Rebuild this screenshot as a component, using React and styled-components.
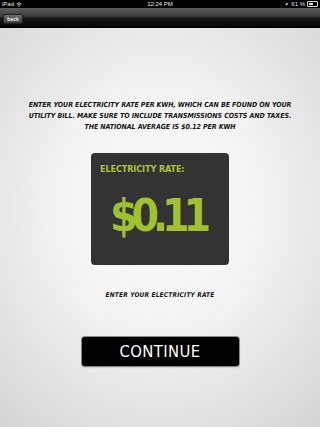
import React from "react";
import styled, { createGlobalStyle } from "styled-components";

const Global = createGlobalStyle`
  html, body { margin: 0; padding: 0; width: 320px; height: 427px; overflow: hidden; background: #000; }
  #root { width: 320px; height: 427px; }
`;

const Screen = styled.div`
  width: 320px;
  height: 427px;
  display: flex;
  flex-direction: column;
  font-family: "Liberation Sans", Arial, sans-serif;
`;

const StatusBar = styled.div`
  height: 8px;
  background: #000;
  color: #e8e8e8;
  font-size: 6px;
  display: grid;
  grid-template-columns: 1fr auto 1fr;
  align-items: center;
  padding: 0 2px;
  line-height: 8px;
`;

const StatusLeft = styled.div`
  display: flex;
  align-items: center;
  gap: 2px;
`;

const StatusRight = styled.div`
  display: flex;
  align-items: center;
  justify-content: flex-end;
  gap: 2px;
`;

const Battery = styled.span`
  display: inline-block;
  width: 9px;
  height: 4px;
  border: 1px solid #ddd;
  border-radius: 1px;
  position: relative;
  &::before {
    content: "";
    position: absolute;
    left: 1px; top: 1px; bottom: 1px;
    width: 4px;
    background: #ddd;
  }
`;

const NavBar = styled.div`
  height: 19px;
  background: linear-gradient(#5e5e5e 0%, #3a3a3a 45%, #161616 55%, #050505 100%);
  border-bottom: 1px solid #000;
  display: flex;
  align-items: center;
  padding: 0 3px;
`;

const BackButton = styled.button`
  margin-top: 2px;
  height: 10px;
  width: 20px;
  padding: 0;
  border: 1px solid #222;
  border-radius: 2px;
  background: linear-gradient(#6e6e6e, #3c3c3c);
  color: #f0f0f0;
  font-family: "Liberation Sans", Arial, sans-serif;
  font-size: 5px;
  font-weight: bold;
  line-height: 8px;
`;

const Content = styled.div`
  flex: 1;
  background: radial-gradient(ellipse 75% 70% at 50% 45%, #fdfdfd 0%, #f2f2f2 45%, #d6d6d6 100%);
  display: flex;
  flex-direction: column;
  align-items: center;
  padding-top: 72px;
`;

const Instructions = styled.p`
  margin: 0;
  text-align: center;
  white-space: nowrap;
  font-family: "DejaVu Sans Condensed", "DejaVu Sans", sans-serif;
  font-style: italic;
  font-weight: bold;
  font-size: 7px;
  line-height: 11px;
  letter-spacing: -0.05px;
  color: #151515;
  text-transform: uppercase;
`;

const RateCard = styled.div`
  margin-top: 20px;
  width: 138px;
  height: 112px;
  box-sizing: border-box;
  background: #333333;
  border-radius: 4px;
  padding: 11px 9px;
  display: flex;
  flex-direction: column;
`;

const RateLabel = styled.div`
  font-family: "DejaVu Sans Condensed", "DejaVu Sans", sans-serif;
  font-weight: bold;
  font-size: 9px;
  color: #a9c43c;
  letter-spacing: -0.1px;
  white-space: nowrap;
`;

const RateValue = styled.div`
  flex: 1;
  display: flex;
  align-items: center;
  justify-content: center;
  font-family: "DejaVu Sans Condensed", "DejaVu Sans", sans-serif;
  font-weight: bold;
  font-size: 44px;
  letter-spacing: -6px;
  color: #9fc22e;
  padding-top: 2px;
  padding-right: 5px;
`;

const Hint = styled.div`
  margin-top: 26px;
  font-family: "DejaVu Sans Condensed", "DejaVu Sans", sans-serif;
  font-style: italic;
  font-weight: bold;
  font-size: 6.5px;
  color: #151515;
  letter-spacing: 0.2px;
`;

const ContinueButton = styled.button`
  margin-top: 38px;
  width: 157px;
  height: 29px;
  background: #000;
  border: none;
  border-radius: 3px;
  box-shadow: 0 0 0 1px #8a8a8a, 0 1px 2px rgba(0,0,0,0.4);
  color: #fff;
  font-family: "DejaVu Sans Condensed", "DejaVu Sans", sans-serif;
  font-size: 16.5px;
  letter-spacing: 0.4px;
  padding: 0;
`;

const Wifi = () => (
  <svg width="6" height="5" viewBox="0 0 12 10">
    <path d="M1 4 A7 7 0 0 1 11 4" stroke="#ddd" strokeWidth="1.6" fill="none" />
    <path d="M3 6 A4.5 4.5 0 0 1 9 6" stroke="#ddd" strokeWidth="1.6" fill="none" />
    <circle cx="6" cy="8.5" r="1.3" fill="#ddd" />
  </svg>
);

const Arrow = () => (
  <svg width="5" height="5" viewBox="0 0 10 10">
    <path d="M9 1 L1 5 L5 5 L5 9 Z" fill="#ddd" />
  </svg>
);

export default function App() {
  return (
    <>
      <Global />
      <Screen>
        <StatusBar>
          <StatusLeft>iPad <Wifi /></StatusLeft>
          <div>12:24 PM</div>
          <StatusRight><Arrow /> 61 % <Battery /></StatusRight>
        </StatusBar>
        <NavBar>
          <BackButton>back</BackButton>
        </NavBar>
        <Content>
          <Instructions>
            Enter your electricity rate per kWh, which can be found on your
            <br />
            utility bill. Make sure to include transmissions costs and taxes.
            <br />
            The national average is $0.12 per kWh
          </Instructions>
          <RateCard>
            <RateLabel>ELECTRICITY RATE:</RateLabel>
            <RateValue>$0.11</RateValue>
          </RateCard>
          <Hint>ENTER YOUR ELECTRICITY RATE</Hint>
          <ContinueButton>CONTINUE</ContinueButton>
        </Content>
      </Screen>
    </>
  );
}
